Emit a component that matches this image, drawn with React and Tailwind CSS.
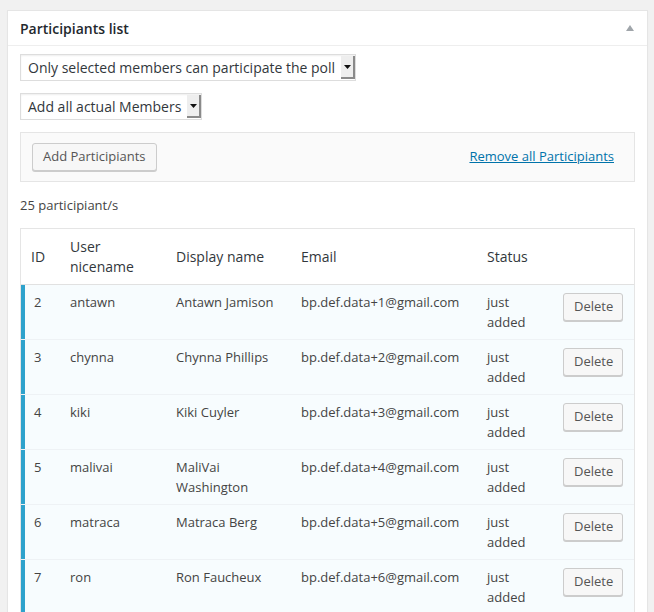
const participants = [
  { id: 2, nicename: 'antawn', name: 'Antawn Jamison', email: 'bp.def.data+1@gmail.com' },
  { id: 3, nicename: 'chynna', name: 'Chynna Phillips', email: 'bp.def.data+2@gmail.com' },
  { id: 4, nicename: 'kiki', name: 'Kiki Cuyler', email: 'bp.def.data+3@gmail.com' },
  { id: 5, nicename: 'malivai', name: 'MaliVai Washington', email: 'bp.def.data+4@gmail.com' },
  { id: 6, nicename: 'matraca', name: 'Matraca Berg', email: 'bp.def.data+5@gmail.com' },
  { id: 7, nicename: 'ron', name: 'Ron Faucheux', email: 'bp.def.data+6@gmail.com' },
];

const cols = 'grid grid-cols-[39px_106px_125px_186px_76px_1fr]';

function FakeSelect({ label, className = '' }) {
  return (
    <div
      className={`flex h-[27px] items-stretch border border-[#ddd] bg-white shadow-[inset_0_1px_2px_rgba(0,0,0,0.07)] ${className}`}
    >
      <span className="flex flex-1 items-center overflow-hidden whitespace-nowrap pl-[7px] text-[14px] text-[#32373c]">
        {label}
      </span>
      <span className="my-px flex w-[14px] shrink-0 items-center justify-center border-r-2 border-b-2 border-[#8a8a8a] bg-[#eeeeee]">
        <svg width="7" height="4" viewBox="0 0 7 4">
          <polygon points="0,0 7,0 3.5,4" fill="#111" />
        </svg>
      </span>
    </div>
  );
}

function WpButton({ children, className = '' }) {
  return (
    <button
      className={`h-[28px] rounded-[3px] border border-[#ccc] bg-[#f7f7f7] px-[10px] text-[13px] text-[#555] shadow-[0_1px_0_#ccc] ${className}`}
    >
      {children}
    </button>
  );
}

export default function App() {
  return (
    <div
      className="min-h-[612px] bg-[#f1f1f1] pt-[10px] pl-[7px] pr-[6px]"
      style={{ fontFamily: '"Open Sans", "Noto Sans", sans-serif' }}
    >
      <div className="border border-[#e5e5e5] bg-white shadow-[0_1px_1px_rgba(0,0,0,0.04)]">
        <div className="flex h-[35px] items-center justify-between border-b border-[#eee] pl-[12px] pr-[13px]">
          <h2 className="text-[14px] font-semibold text-[#23282d]">Participiants list</h2>
          <svg width="8" height="6" viewBox="0 0 8 6">
            <polygon points="4,0 8,6 0,6" fill="#a0a5aa" />
          </svg>
        </div>

        <div className="px-[12px] pt-[8px] text-[#444]">
          <FakeSelect label="Only selected members can participate the poll" className="w-[336px]" />
          <FakeSelect label="Add all actual Members" className="mt-[12px] w-[182px]" />

          <div className="mt-[12px] flex items-center justify-between border border-[#e5e5e5] bg-[#fafafa] px-[11px] py-[10px]">
            <WpButton>Add Participiants</WpButton>
            <a href="#" className="mr-[9px] text-[13px] text-[#0073aa] underline">
              Remove all Participiants
            </a>
          </div>

          <p className="mt-[13px] text-[13px] leading-[20px] text-[#444]">25 participiant/s</p>

          <div className="mt-[13px] border border-[#e5e5e5]">
            <div className={`${cols} items-center border-b border-[#e1e1e1] bg-white text-[14px] leading-[19.6px] text-[#32373c]`}>
              <div className="px-[10px] py-[8px]">ID</div>
              <div className="px-[10px] py-[8px]">User nicename</div>
              <div className="px-[10px] py-[8px]">Display name</div>
              <div className="px-[10px] py-[8px]">Email</div>
              <div className="px-[10px] py-[8px]">Status</div>
              <div className="px-[10px] py-[8px]" />
            </div>
            {participants.map((p) => (
              <div
                key={p.id}
                className={`${cols} border-b border-[#eef2f5] bg-[#f7fcfe] text-[13px] leading-[19.5px] text-[#444] shadow-[inset_4px_0_0_#2ea2cc]`}
              >
                <div className="pl-[13px] pr-[10px] pt-[8px] pb-[7px]">{p.id}</div>
                <div className="px-[10px] pt-[8px] pb-[7px]">{p.nicename}</div>
                <div className="px-[10px] pt-[8px] pb-[7px]">{p.name}</div>
                <div className="px-[10px] pt-[8px] pb-[7px]">{p.email}</div>
                <div className="px-[10px] pt-[8px] pb-[7px]">just added</div>
                <div className="px-[10px] pt-[8px] pb-[7px]">
                  <WpButton className="w-[60px] px-0">Delete</WpButton>
                </div>
              </div>
            ))}
          </div>
        </div>
      </div>
    </div>
  );
}
